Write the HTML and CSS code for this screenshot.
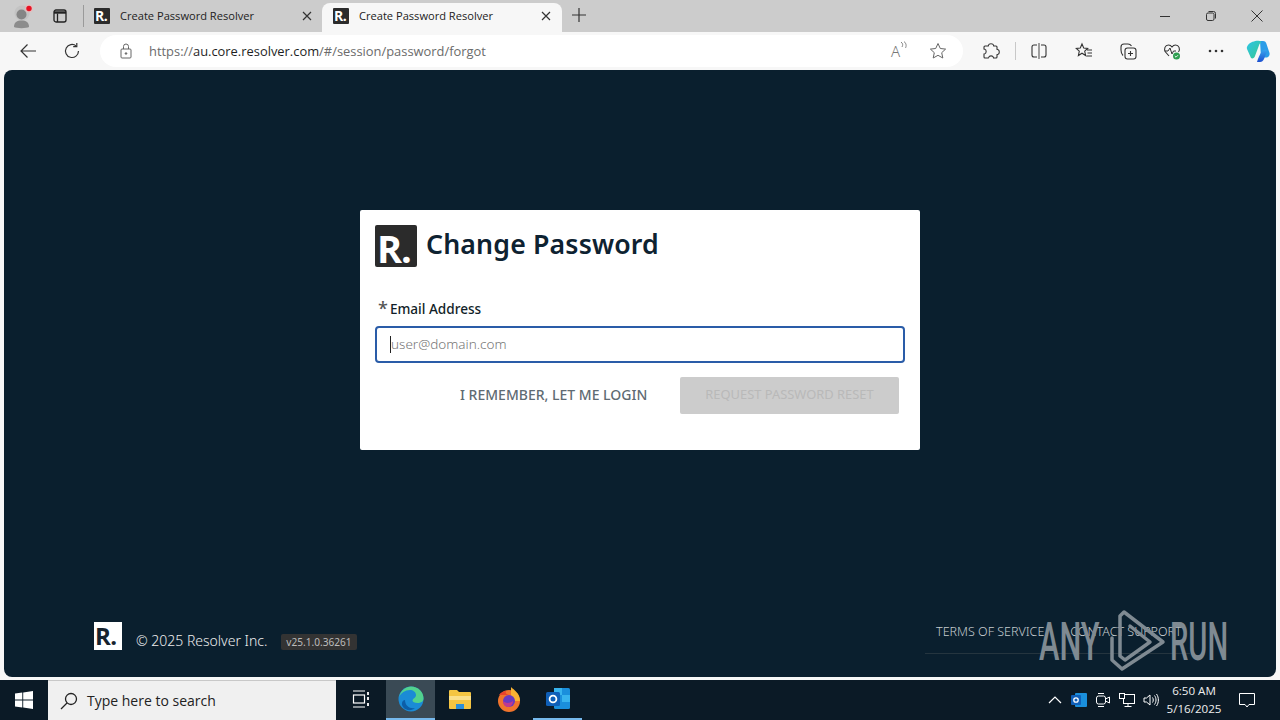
FILE: index.html
```html
<!DOCTYPE html>
<html lang="en">
<head>
<meta charset="utf-8">
<title>Create Password Resolver</title>
<link rel="stylesheet" href="styles.css">
</head>
<body>
<div class="screen">
  <header class="tabstrip">
    <div class="slot profile">
      <svg width="26" height="26" viewBox="0 0 26 26"><circle cx="12" cy="10" r="7.500" fill="#bdbdbd" opacity=".6"/><circle cx="11.500" cy="11.500" r="5" fill="#858585"/><path d="M4 24c0-5 3-6.500 7.500-6.500S19 19 19 24c-2 1.500-13 1.500-15 0z" fill="#8c8c8c"/><circle cx="19" cy="5.500" r="4" fill="#f3b5b5" opacity=".6"/><circle cx="19" cy="5.500" r="2.700" fill="#e81123"/></svg>
    </div>
    <div class="slot tabactions">
      <svg width="16" height="16" viewBox="0 0 16 16" fill="none" stroke="#222" stroke-width="1.300"><rect x="2" y="2" width="12" height="12" rx="2"/><path d="M2 4.500h12" stroke-width="2.400"/><path d="M5.500 5.500V14"/></svg>
    </div>
    <div class="tabsep"></div>
    <div class="tab">
      <span class="favicon">R.</span><span class="tabtitle">Create Password Resolver</span>
      <svg class="tabclose" width="12" height="12" viewBox="0 0 12 12" stroke="#333" stroke-width="1.200"><path d="M2 2l8 8M10 2l-8 8"/></svg>
    </div>
    <div class="tab active">
      <span class="favicon">R.</span><span class="tabtitle">Create Password Resolver</span>
      <svg class="tabclose" width="12" height="12" viewBox="0 0 12 12" stroke="#333" stroke-width="1.200"><path d="M2 2l8 8M10 2l-8 8"/></svg>
    </div>
    <div class="newtab">
      <svg width="16" height="16" viewBox="0 0 16 16" stroke="#333" stroke-width="1.200"><path d="M8 1v14M1 8h14"/></svg>
    </div>
    <div class="winctrls">
      <div class="winbtn"><svg width="12" height="12" viewBox="0 0 12 12" stroke="#333"><path d="M1 6.500h10"/></svg></div>
      <div class="winbtn"><svg width="12" height="12" viewBox="0 0 12 12" fill="none" stroke="#333"><rect x="1.500" y="3" width="7.500" height="7.500" rx="1.500"/><path d="M3.500 1.500h5a2 2 0 0 1 2 2v5"/></svg></div>
      <div class="winbtn"><svg width="12" height="12" viewBox="0 0 12 12" stroke="#333"><path d="M.5.500l11 11M11.500.500l-11 11"/></svg></div>
    </div>
  </header>

  <nav class="toolbar">
    <div class="tool back"><svg width="18" height="16" viewBox="0 0 18 16" fill="none" stroke="#333" stroke-width="1.200"><path d="M17 8H2M8.500 1.500L2 8l6.500 6.500"/></svg></div>
    <div class="tool reload"><svg width="18" height="18" viewBox="0 0 18 18" fill="none" stroke="#333" stroke-width="1.200"><path d="M15.500 9a6.500 6.500 0 1 1-2.200-4.900"/><path d="M13.800 1v3.600h-3.600"/></svg></div>
    <div class="address">
      <svg class="lock" width="14" height="16" viewBox="0 0 14 16" fill="none" stroke="#666"><rect x="2" y="6" width="10" height="9" rx="1"/><path d="M4.500 6V3.500a2.500 2.500 0 0 1 5 0V6"/><circle cx="7" cy="10.500" r=".8" fill="#666"/></svg>
      <span class="url"><span class="urlmuted">https://</span>au.core.resolver.com<span class="urlmuted">/#/session/password/forgot</span></span>
      <span class="readaloud">A<svg width="8" height="10" viewBox="0 0 8 10" fill="none" stroke="#777" stroke-width=".9"><path d="M1 1c2 1.500 2 3 1 5M4 .5c2.500 2 2.500 4.500 1.500 6.500"/></svg></span>
      <svg class="addrstar" width="18" height="18" viewBox="0 0 18 18" fill="none" stroke="#666" stroke-width="1"><path d="M9 1.500l2.300 5 5.300.6-3.900 3.600 1.100 5.300L9 13.300 4.200 16l1.100-5.300L1.400 7.100l5.300-.6z"/></svg>
    </div>
    <div class="tools">
      <div class="tool"><svg width="18" height="18" viewBox="0 0 18 18" fill="none" stroke="#333" stroke-width="1.100"><path d="M6.500 3.200C7 1.200 11 1.200 11.500 3.200L11.700 4H14a1 1 0 0 1 1 1v2.300l.8.2c2 .5 2 4.500 0 5l-.8.2V15a1 1 0 0 1-1 1h-2.500l-.2-.8c-.5-1.800-4-1.800-4.500 0L6.300 16H3a1 1 0 0 1-1-1v-3l.8-.2c1.800-.5 1.800-4 0-4.500L2 7.100V5a1 1 0 0 1 1-1h3.300z"/></svg></div>
      <div class="toolsep"></div>
      <div class="tool"><svg width="18" height="18" viewBox="0 0 18 18" fill="none" stroke="#333" stroke-width="1.100"><path d="M7 3H4a2 2 0 0 0-2 2v8a2 2 0 0 0 2 2h3M11 3h3a2 2 0 0 1 2 2v8a2 2 0 0 1-2 2h-3"/><path d="M9 1v16" stroke="#555"/></svg></div>
      <div class="tool"><svg width="18" height="18" viewBox="0 0 18 18" fill="none" stroke="#333" stroke-width="1.100"><path d="M7 2l1.700 4 4 .4-3 2.800.9 4.300L7 11.200l-3.600 2.300.9-4.300-3-2.800 4-.4zM12 8h5M12.500 11H17M11.500 14H17"/></svg></div>
      <div class="tool"><svg width="18" height="18" viewBox="0 0 18 18" fill="none" stroke="#333" stroke-width="1.100"><rect x="6" y="6" width="11" height="11" rx="2.500"/><path d="M11.500 9v5M9 11.500h5M4 13.500C2.500 12 2 10 2 8V5a3 3 0 0 1 3-3h4c1.500 0 2.500.5 3.500 2"/></svg></div>
      <div class="tool"><svg width="18" height="18" viewBox="0 0 18 18" fill="none"><path d="M6 14L2.500 10C.5 7 2 3 5.500 3 7 3 8.300 4 9 5c.7-1 2-2 3.500-2C16 3 17.500 7 15.500 10" stroke="#333" stroke-width="1.100"/><path d="M1.500 9H5l2-3 2 6 1.500-3H13" stroke="#333"/><circle cx="13.500" cy="14" r="3.500" fill="#2e9e4f"/><path d="M11.800 14l1.200 1.200 2-2" stroke="#fff" stroke-width=".9"/></svg></div>
      <div class="tool"><svg width="16" height="4" viewBox="0 0 16 4" fill="#333"><circle cx="2" cy="2" r="1.300"/><circle cx="8" cy="2" r="1.300"/><circle cx="14" cy="2" r="1.300"/></svg></div>
      <div class="tool copilot"><svg width="24" height="24" viewBox="0 0 24 24"><defs><linearGradient id="cpa" x1="0" y1="0" x2="1" y2="1"><stop offset="0" stop-color="#2fc4e8"/><stop offset="1" stop-color="#35c98f"/></linearGradient><linearGradient id="cpb" x1="0" y1="0" x2="0" y2="1"><stop offset="0" stop-color="#37a5ee"/><stop offset="1" stop-color="#1c4fd0"/></linearGradient></defs><path d="M14 2h3c2 0 3 1 3.500 3l3 9c.5 2.500-1 4.500-3.500 4.500H15z" fill="#2a9ce8"/><path d="M8 2.500c1-1 3-1 6-.5 2 .5 1 2-.5 3L9 17c-.5 2-2.500 3-4 2L1 10C0 7 4 3 8 2.500z" fill="url(#cpa)"/><path d="M11 23h3c2 0 3-1 4-3l3-8c0-1.500-3-2-5 0-2 3-4 7-5 11z" fill="url(#cpb)"/></svg></div>
    </div>
  </nav>

  <main class="page">
    <section class="card">
      <div class="cardhead">
        <span class="logo">R.</span>
        <h1 class="title">Change Password</h1>
      </div>
      <label class="fieldlabel" for="email"><span class="req">*</span>Email Address</label>
      <div class="inputbox" id="email"><span class="caret"></span><span class="placeholder">user@domain.com</span></div>
      <div class="actions">
        <span class="linkbtn">I REMEMBER, LET ME LOGIN</span>
        <span class="submit">REQUEST PASSWORD RESET</span>
      </div>
    </section>
    <footer class="pagefoot">
      <div class="footleft">
        <span class="footlogo">R.</span>
        <span class="copy">© 2025 Resolver Inc.</span>
        <span class="version">v25.1.0.36261</span>
      </div>
      <div class="footlinks">
        <span>TERMS OF SERVICE</span>
        <span>CONTACT SUPPORT</span>
      </div>
    </footer>
    <div class="watermark">
      <span class="wmtext">ANY</span>
      <svg class="wmicon" width="62" height="64" viewBox="0 0 62 64" fill="none" stroke="#7f8a92" stroke-width="3.500" stroke-linejoin="round" stroke-linecap="round"><path d="M6 30V52L16 61 57 34 18 4 14 8V48L19 52 44 34 24 18"/></svg>
      <span class="wmtext wmrun">RUN</span>
    </div>
  </main>

  <div class="taskbar">
    <div class="start"><svg width="18" height="18" viewBox="0 0 18 18" fill="#fff"><path d="M0 2.600l7.300-1v7H0zM8.200 1.400L18 0v8.600H8.200zM0 9.500h7.300v7L0 15.400zM8.200 9.500H18V18l-9.800-1.400z"/></svg></div>
    <div class="search">
      <svg width="20" height="20" viewBox="0 0 20 20" fill="none" stroke="#222" stroke-width="1.300"><circle cx="12" cy="8" r="5.500"/><path d="M8 12l-6 6"/></svg>
      <span>Type here to search</span>
    </div>
    <div class="taskicon"><svg width="18" height="18" viewBox="0 0 18 18" fill="none" stroke="#fff" stroke-width="1.200"><path d="M1 1h12M1 17h12"/><rect x="1.500" y="5" width="11" height="8"/><path d="M16 2v3M16 7v3M16 13v3" stroke-width="1.800"/></svg></div>
    <div class="taskicon running current"><svg width="26" height="26" viewBox="0 0 26 26"><circle cx="13" cy="13" r="12.500" fill="#1b8bd6"/><path d="M1 11C3 4 8 .5 13 .5c7 0 12.500 5 12.500 12 0 3-2.500 4.500-6 4.500-3 0-5-1-5-2.500C15 12 18 12 18 9c0-3-3-5-6-5C7 4 3 7 1 11z" fill="#52d28e"/><path d="M7 14c0 6 5 9 10 8-3 3-9 3-12-1-2-3-1-7 2-7z" fill="#0c5ea8"/></svg></div>
    <div class="taskicon"><svg width="24" height="22" viewBox="0 0 24 22"><path d="M1 3a1 1 0 0 1 1-1h7l2 2h11a1 1 0 0 1 1 1v15a1 1 0 0 1-1 1H2a1 1 0 0 1-1-1z" fill="#f4c542"/><path d="M1 8h22v4H1z" fill="#fbe08a"/><path d="M8 16h8v5H8z" fill="#2b8fd9"/></svg></div>
    <div class="taskicon"><svg width="24" height="26" viewBox="0 0 24 26"><circle cx="12" cy="15" r="11" fill="#f0742c"/><path d="M14 1c3 3 9 6 9 14H14z" fill="#f9b233"/><path d="M2 9c2-3 5-4 7-4-1 2 0 3 3 4z" fill="#e8432d"/><circle cx="12" cy="15" r="6" fill="#6a3ac0"/><path d="M6 15c2 2 6 3 10 0 0 4-3 6-5 6s-5-2-5-6z" fill="#c0398e"/></svg></div>
    <div class="taskicon running"><svg width="26" height="24" viewBox="0 0 26 24"><rect x="9" y="1" width="16" height="21" rx="1.500" fill="#1a8fdc"/><path d="M9 1h8v7H9z" fill="#38b4ee"/><path d="M17 8h8v7h-8z" fill="#38b4ee"/><rect x="1" y="5" width="14" height="14" rx="1.500" fill="#0f5fb8"/><circle cx="8" cy="12" r="3.400" fill="none" stroke="#fff" stroke-width="1.800"/></svg></div>
    <div class="tray">
      <svg class="trayicon" width="14" height="8" viewBox="0 0 14 8" fill="none" stroke="#fff" stroke-width="1.200"><path d="M1 7l6-6 6 6"/></svg>
      <svg class="trayicon" width="16" height="16" viewBox="0 0 16 16"><rect x="4" y="1" width="12" height="14" rx="1" fill="#1a8fdc"/><rect x="0" y="3" width="10" height="10" rx="1" fill="#0f5fb8"/><circle cx="5" cy="8" r="2.200" fill="none" stroke="#fff" stroke-width="1.300"/></svg>
      <svg class="trayicon" width="16" height="18" viewBox="0 0 16 18" fill="none" stroke="#fff"><rect x="1.500" y="5" width="9" height="8" rx="2"/><path d="M10.500 8l4-2v6l-4-2M3 2.500h6M3 15.500h6"/></svg>
      <svg class="trayicon" width="16" height="16" viewBox="0 0 16 16" fill="none" stroke="#fff"><rect x="4.500" y="2.500" width="11" height="9"/><rect x=".5" y="1.500" width="5" height="5" fill="#0b1a26"/><path d="M9 11.500v3M5.500 14.500h7"/></svg>
      <svg class="trayicon" width="16" height="16" viewBox="0 0 16 16" fill="none" stroke="#fff"><path d="M1 6v4h2.500L7 13V3L3.500 6zM9.500 5.500c1 1.500 1 3.500 0 5M11.500 3.500c2 2.500 2 6.500 0 9M13.500 2c2.500 3.500 2.500 8.500 0 12"/></svg>
      <div class="clock"><span>6:50 AM</span><span>5/16/2025</span></div>
      <svg class="notif" width="16" height="16" viewBox="0 0 16 16" fill="none" stroke="#fff"><path d="M.5 1.500h15v11H10l-2 2.500-2-2.500H.5z"/></svg>
    </div>
  </div>
</div>
</body>
</html>
```

FILE: styles.css
```css
* { box-sizing: border-box; }
html, body { margin: 0; padding: 0; }
body { width: 1280px; height: 720px; overflow: hidden; font-family: "Noto Sans", "Open Sans", sans-serif; }
.screen { width: 1280px; height: 720px; display: flex; flex-direction: column; background: #f7f7f7; }

/* tab strip */
.tabstrip { height: 32px; background: #cccccc; display: flex; align-items: flex-end; flex: none; }
.slot { display: flex; align-items: center; justify-content: center; height: 32px; }
.profile { width: 44px; padding-left: 2px; }
.tabactions { width: 32px; }
.tabsep { width: 1px; height: 22px; background: #9a9a9a; margin: 0 0 5px 7px; align-self: flex-end; }
.tab { width: 238px; height: 29px; display: flex; align-items: center; padding: 0 0 4px 10px; font-family: "Open Sans", sans-serif; font-size: 11.100px; color: #222; border-radius: 8px 8px 0 0; }
.tab.active { background: #f7f7f7; width: 240px; padding-left: 11px; }
.favicon { width: 16px; height: 16px; background: #2b2b2b; color: #fff; font: 700 14px/16px "Open Sans", sans-serif; letter-spacing: -.5px; padding-left: 1px; border-radius: 1px; flex: none; }
.tabtitle { margin-left: 10px; width: 181px; white-space: nowrap; }
.tabclose { flex: none; margin-left: 0; }
.newtab { width: 34px; height: 32px; padding-bottom: 2px; display: flex; align-items: center; justify-content: center; }
.winctrls { margin-left: auto; display: flex; height: 32px; }
.winbtn { width: 46px; display: flex; align-items: center; justify-content: center; }

/* toolbar */
.toolbar { height: 38px; flex: none; display: flex; align-items: center; background: #f7f7f7; padding-left: 6px; }
.tool { width: 44px; height: 32px; display: flex; align-items: center; justify-content: center; flex: none; }
.address { width: 863px; height: 32px; margin-left: 6px; background: #fff; border-radius: 16px; display: flex; align-items: center; padding-left: 19px; flex: none; }
.lock { flex: none; }
.url { margin-left: 16px; font-family: "Open Sans", sans-serif; font-size: 12.900px; color: #1f1f1f; width: 733px; white-space: nowrap; }
.urlmuted { color: #6b6b6b; }
.readaloud { width: 22px; font-size: 15px; color: #777; display: flex; align-items: flex-start; margin-left: 9px; font-weight: 300; }
.addrstar { margin-left: 16px; flex: none; }
.tools { display: flex; align-items: center; margin-left: 6px; }
.toolsep { width: 1px; height: 18px; background: #c8c8c8; margin: 0 1px 0 2px; flex: none; }
.tools .tool { width: 44.250px; }
.tools .tool.copilot { width: 40px; margin-left: -1px; }

/* page */
.page { position: relative; flex: none; height: 607px; margin: 0 4px; background: #0a1f2e; border-radius: 8px; display: flex; flex-direction: column; align-items: center; padding-top: 140px; }
.card { width: 560px; height: 240px; background: #fff; border-radius: 2px; padding: 15px; flex: none; }
.cardhead { display: flex; align-items: flex-start; }
.logo { width: 42px; height: 42px; background: #2b2b2b; color: #fff; font: 700 38px/42px "Open Sans", sans-serif; letter-spacing: -1px; padding: 2px 0 0 2px; border-radius: 2px; flex: none; }
.title { margin: 0 0 0 9px; font-family: "Noto Sans", sans-serif; font-size: 26.700px; line-height: 37px; font-weight: 600; color: #0e2231; letter-spacing: .15px; }
.fieldlabel { display: flex; align-items: center; height: 18px; margin: 32px 0 9px 3px; font-size: 13.600px; font-weight: 500; color: #111e28; }
.req { color: #555; font-size: 18px; margin-right: 2px; line-height: 18px; }
.inputbox { width: 530px; height: 37px; border: 2px solid #2a5ca8; border-radius: 4px; display: flex; align-items: center; padding: 0 0 1px 13px; }
.caret { width: 1px; height: 17px; background: #222; flex: none; }
.placeholder { font-size: 13.500px; color: #777; font-weight: 300; }
.actions { display: flex; align-items: center; margin-top: 14px; padding-left: 85px; }
.linkbtn { width: 220px; font-size: 14px; font-weight: 500; line-height: 18px; margin-top: -2px; color: #5f6b73; white-space: nowrap; }
.submit { width: 219px; height: 37px; background: #cccccc; border-radius: 2px; color: #b9b9b9; font-size: 12.900px; line-height: 35px; text-align: center; white-space: nowrap; }

.pagefoot { margin-top: auto; width: 100%; display: flex; justify-content: space-between; align-items: flex-start; padding: 0 90px 23px 90px; }
.footleft { display: flex; align-items: center; }
.footlogo { width: 28px; height: 28px; background: #fff; color: #16232e; font: 700 24px/27px "Open Sans", sans-serif; letter-spacing: -.5px; padding-left: 1px; flex: none; }
.copy { margin-left: 14px; font-size: 14px; color: #eee; margin-top: 8px; font-weight: 300; white-space: nowrap; }
.version { margin-left: 14px; margin-top: 12px; background: #333; border-radius: 2px; color: #bbb; font-size: 10.100px; line-height: 16px; height: 16px; padding: 0 5px; white-space: nowrap; }
.footlinks { display: flex; gap: 26px; padding: 2px 0 13px 11px; border-bottom: 1px solid #25353f; font-size: 12.500px; line-height: 16px; color: #c5cbcf; font-weight: 300; width: 265px; margin-right: -4px; white-space: nowrap; }

.watermark { position: absolute; left: 1035px; top: 540px; display: flex; align-items: center; height: 64px; }
.wmtext { font-family: "Roboto", sans-serif; font-weight: 500; font-size: 53px; line-height: 64px; color: #7f8a92; display: inline-block; width: 58px; transform: scaleX(.58); transform-origin: left center; white-space: nowrap; }
.wmrun { transform: scaleX(.55); }
.wmicon { margin: -4px 2px 0 9px; flex: none; }

/* taskbar */
.taskbar { margin-top: 3px; height: 40px; flex: none; background: #0b1a26; display: flex; align-items: center; color: #fff; }
.start { width: 48px; height: 40px; display: flex; align-items: center; justify-content: center; flex: none; }
.search { width: 288px; height: 40px; background: #f0f0f0; border-top: 1px solid #c8c8c8; display: flex; align-items: center; padding-left: 11px; gap: 8px; color: #222; font-family: "Open Sans", sans-serif; font-size: 14px; flex: none; }
.taskicon { width: 49px; height: 40px; display: flex; align-items: center; justify-content: center; flex: none; border-bottom: 2px solid transparent; }
.current { margin-left: 1px; background: #3a4a55; }
.running { border-bottom-color: #76b9ed; }
.tray { margin-left: auto; display: flex; align-items: center; height: 40px; }
.trayicon { margin-left: 8px; width: 16px; flex: none; }
.clock { width: 70px; display: flex; flex-direction: column; align-items: center; font-family: "Open Sans", sans-serif; font-size: 11.600px; line-height: 18px; color: #eee; }
.notif { margin: 0 25px 0 10px; flex: none; }
```
